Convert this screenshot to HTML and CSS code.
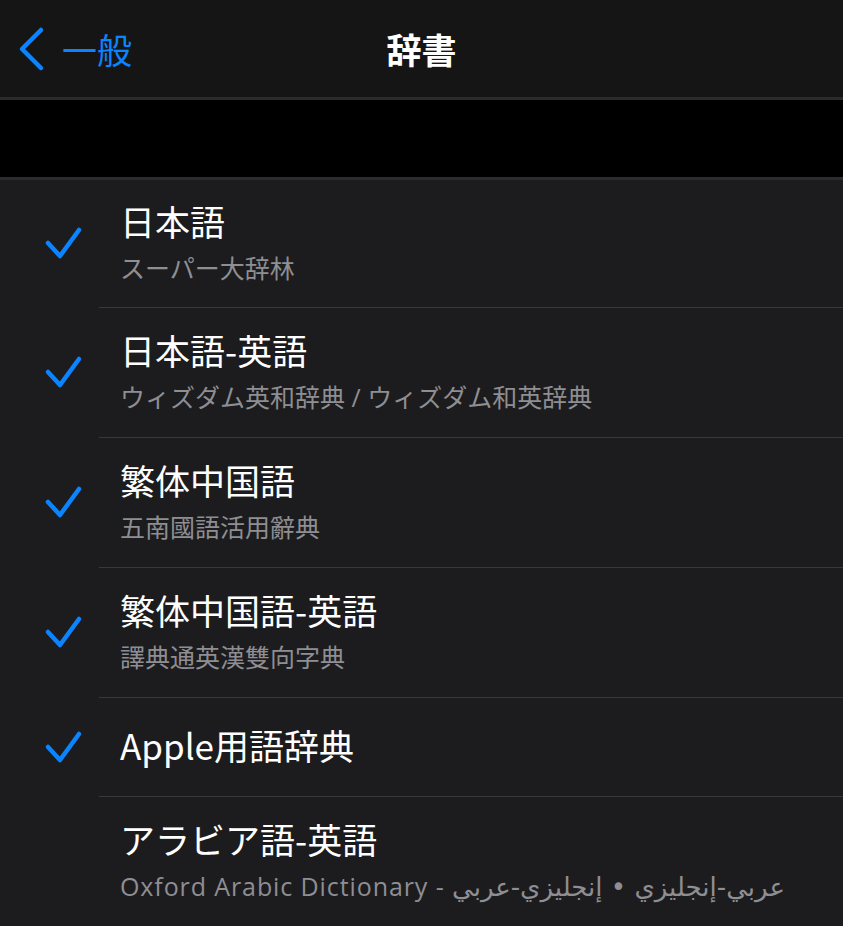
FILE: index.html
```html
<!DOCTYPE html>
<html lang="ja">
<head>
    <meta charset="UTF-8">
    <meta name="viewport" content="width=device-width, initial-scale=1.0">
    <title>辞書</title>
    <link rel="stylesheet" href="styles.css">
</head>
<body>
    <header class="navbar">
        <a class="back" href="#">
            <svg class="chevron" width="30" height="46" viewBox="0 0 30 46">
                <path d="M24 4 L5 23 L24 42" fill="none" stroke="#0a84ff" stroke-width="4.5" stroke-linecap="round" stroke-linejoin="round"/>
            </svg>
            <span>一般</span>
        </a>
        <h1 class="title">辞書</h1>
    </header>

    <div class="spacer"></div>

    <ul class="list">
        <li class="row">
            <span class="check"><svg width="40" height="40" viewBox="0 0 40 40"><path d="M4 19 L16 32 L35 6" fill="none" stroke="#0a84ff" stroke-width="4.5" stroke-linecap="round" stroke-linejoin="round"/></svg></span>
            <div class="cell">
                <div class="name">日本語</div>
                <div class="sub">スーパー大辞林</div>
            </div>
        </li>
        <li class="row">
            <span class="check"><svg width="40" height="40" viewBox="0 0 40 40"><path d="M4 19 L16 32 L35 6" fill="none" stroke="#0a84ff" stroke-width="4.5" stroke-linecap="round" stroke-linejoin="round"/></svg></span>
            <div class="cell">
                <div class="name">日本語-英語</div>
                <div class="sub">ウィズダム英和辞典 / ウィズダム和英辞典</div>
            </div>
        </li>
        <li class="row">
            <span class="check"><svg width="40" height="40" viewBox="0 0 40 40"><path d="M4 19 L16 32 L35 6" fill="none" stroke="#0a84ff" stroke-width="4.5" stroke-linecap="round" stroke-linejoin="round"/></svg></span>
            <div class="cell">
                <div class="name">繁体中国語</div>
                <div class="sub">五南國語活用辭典</div>
            </div>
        </li>
        <li class="row">
            <span class="check"><svg width="40" height="40" viewBox="0 0 40 40"><path d="M4 19 L16 32 L35 6" fill="none" stroke="#0a84ff" stroke-width="4.5" stroke-linecap="round" stroke-linejoin="round"/></svg></span>
            <div class="cell">
                <div class="name">繁体中国語-英語</div>
                <div class="sub">譯典通英漢雙向字典</div>
            </div>
        </li>
        <li class="row single">
            <span class="check"><svg width="40" height="40" viewBox="0 0 40 40"><path d="M4 19 L16 32 L35 6" fill="none" stroke="#0a84ff" stroke-width="4.5" stroke-linecap="round" stroke-linejoin="round"/></svg></span>
            <div class="cell">
                <div class="name">Apple用語辞典</div>
            </div>
        </li>
        <li class="row">
            <span class="check"></span>
            <div class="cell">
                <div class="name">アラビア語-英語</div>
                <div class="sub latin">Oxford Arabic Dictionary - <span class="ar">عربي-إنجليزي • إنجليزي-عربي</span></div>
            </div>
        </li>
    </ul>
</body>
</html>
```

FILE: styles.css
```css
body {
    margin: 0;
    background-color: #1c1c1e;
    font-family: "Noto Sans CJK JP", "DejaVu Sans", sans-serif;
    color: #fff;
    overflow: hidden;
}
.navbar {
    position: relative;
    height: 97px;
    background-color: #151515;
    border-bottom: 3px solid #2a2a2c;
    display: flex;
    align-items: center;
    justify-content: center;
}
.back {
    position: absolute;
    left: 17px;
    top: 26px;
    display: flex;
    align-items: center;
    gap: 15px;
    color: #0a84ff;
    text-decoration: none;
    font-size: 35px;
    line-height: 46px;
}
.title {
    margin: 0;
    font-size: 35px;
    font-weight: bold;
}
.spacer {
    height: 77px;
    background-color: #000;
    border-bottom: 3px solid #2c2c2e;
}
.list {
    list-style: none;
    margin: 0;
    padding: 0;
}
.row {
    display: flex;
    align-items: center;
    min-height: 130px;
}
.row:first-child {
    min-height: 128px;
}
.row.single {
    min-height: 99px;
}
.check {
    width: 99px;
    flex-shrink: 0;
    display: flex;
    justify-content: center;
    padding-left: 28px;
    box-sizing: border-box;
}
.cell {
    align-self: stretch;
    flex: 1;
    display: flex;
    flex-direction: column;
    justify-content: center;
    padding: 0 0 4px 21px;
    border-bottom: 1px solid #38383a;
    gap: 12px;
}
.row:last-child .cell {
    border-bottom: none;
}
.name {
    font-size: 35px;
    line-height: 40px;
}
.sub {
    font-family: "Open Sans", "Noto Sans CJK JP", "DejaVu Sans", sans-serif;
    font-size: 25px;
    line-height: 30px;
    color: #8e8e93;
    white-space: nowrap;
}
.latin {
    letter-spacing: 0.9px;
}
.ar {
    font-family: "DejaVu Sans", sans-serif;
    font-size: 26px;
    letter-spacing: 0;
}
```
